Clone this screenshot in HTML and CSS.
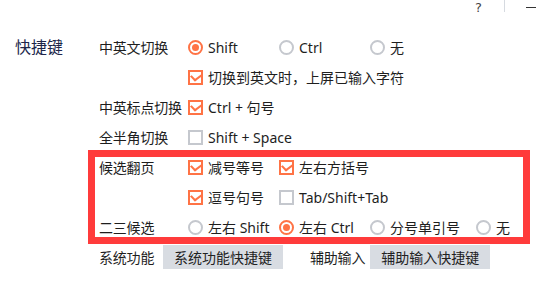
FILE: index.html
```html
<!DOCTYPE html>
<html lang="zh-CN">
<head>
<meta charset="utf-8">
<link rel="stylesheet" href="styles.css">
</head>
<body>
<div class="page">
  <div class="titlebar">
    <span class="help">?</span>
    <span class="sep"></span>
    <span class="minimize"></span>
  </div>
  <div class="section">
    <div class="section-title">快捷键</div>
    <div class="rows">
      <div class="row">
        <div class="label">中英文切换</div>
        <div class="opt"><span class="radio on"></span><span>Shift</span></div>
        <div class="opt"><span class="radio"></span><span>Ctrl</span></div>
        <div class="opt"><span class="radio"></span><span>无</span></div>
      </div>
      <div class="row">
        <div class="label"></div>
        <div class="opt"><span class="check on"></span><span>切换到英文时，上屏已输入字符</span></div>
      </div>
      <div class="row">
        <div class="label">中英标点切换</div>
        <div class="opt"><span class="check on"></span><span>Ctrl + 句号</span></div>
      </div>
      <div class="row">
        <div class="label">全半角切换</div>
        <div class="opt"><span class="check"></span><span>Shift + Space</span></div>
      </div>
      <div class="highlight">
        <div class="row">
          <div class="label">候选翻页</div>
          <div class="opt"><span class="check on"></span><span>减号等号</span></div>
          <div class="opt"><span class="check on"></span><span>左右方括号</span></div>
        </div>
        <div class="row">
          <div class="label"></div>
          <div class="opt"><span class="check on"></span><span>逗号句号</span></div>
          <div class="opt"><span class="check"></span><span>Tab/Shift+Tab</span></div>
        </div>
        <div class="row">
          <div class="label">二三候选</div>
          <div class="opt"><span class="radio"></span><span>左右 Shift</span></div>
          <div class="opt"><span class="radio on"></span><span>左右 Ctrl</span></div>
          <div class="opt wide"><span class="radio"></span><span>分号单引号</span></div>
          <div class="opt"><span class="radio"></span><span>无</span></div>
        </div>
      </div>
      <div class="row">
        <div class="label short">系统功能</div>
        <button class="btn">系统功能快捷键</button>
        <div class="label inline">辅助输入</div>
        <button class="btn">辅助输入快捷键</button>
      </div>
    </div>
  </div>
</div>
</body>
</html>
```
FILE: styles.css
```css
html, body {
  margin: 0;
  padding: 0;
  background: #ffffff;
}
body {
  font-family: "Noto Sans", "Noto Sans CJK SC", sans-serif;
  font-size: 14px;
  color: #1e1e1e;
  overflow: hidden;
}
.page {
  width: 536px;
  height: 297px;
  overflow: hidden;
}
.titlebar {
  height: 32px;
  display: flex;
  justify-content: flex-end;
  align-items: flex-start;
}
.help {
  font-family: "DejaVu Sans", sans-serif;
  font-size: 13px;
  line-height: 15px;
  color: #444;
  width: 9px;
  text-align: center;
}
.sep {
  width: 1px;
  height: 12px;
  background: #d6dae0;
  margin-left: 21px;
}
.minimize {
  width: 10px;
  height: 1px;
  background: #333;
  margin-top: 7px;
  margin-left: 21px;
}
.section {
  display: flex;
  padding-left: 15px;
}
.section-title {
  width: 84px;
  flex: none;
  font-size: 16px;
  line-height: 30px;
  color: #20264a;
}
.rows {
  display: flex;
  flex-direction: column;
  flex: none;
  width: 437px;
}
.row {
  height: 30px;
  display: flex;
  align-items: center;
  white-space: nowrap;
}
.label {
  width: 89px;
  flex: none;
  letter-spacing: -0.2px;
}
.label.short {
  width: 64px;
}
.label.inline {
  width: auto;
  margin-left: 27px;
  margin-right: 5px;
}
.opt {
  min-width: 91px;
  flex: none;
  display: flex;
  align-items: center;
  gap: 5px;
}
.opt.wide {
  min-width: 106px;
}
.radio, .check {
  width: 15px;
  height: 15px;
  box-sizing: border-box;
  border: 2px solid #c5c8ce;
  flex: none;
  position: relative;
}
.radio {
  border-radius: 50%;
}
.radio.on {
  border-color: #ff7345;
}
.radio.on::after {
  content: "";
  position: absolute;
  left: 2px;
  top: 2px;
  width: 7px;
  height: 7px;
  border-radius: 50%;
  background: #ff7345;
}
.check.on {
  border-color: #ff7345;
}
.check.on::after {
  content: "";
  position: absolute;
  width: 5px;
  height: 8px;
  border-right: 2px solid #ff7345;
  border-bottom: 2px solid #ff7345;
  transform: rotate(45deg) skewX(-8deg);
  transform-origin: center;
  left: 2.5px;
  top: -0.5px;
}
.highlight {
  position: relative;
  margin-left: -11px;
  padding-left: 11px;
  width: 442px;
  box-sizing: border-box;
}
.highlight::after {
  content: "";
  position: absolute;
  left: 0;
  right: 0;
  top: -2px;
  bottom: -2px;
  border: 7px solid #ff3b3b;
  pointer-events: none;
}
.btn {
  flex: none;
  font-family: inherit;
  font-size: 14px;
  color: #222;
  background: #d8dce2;
  border: none;
  height: 24px;
  width: 120px;
  padding: 0;
  margin: 0;
}
```
